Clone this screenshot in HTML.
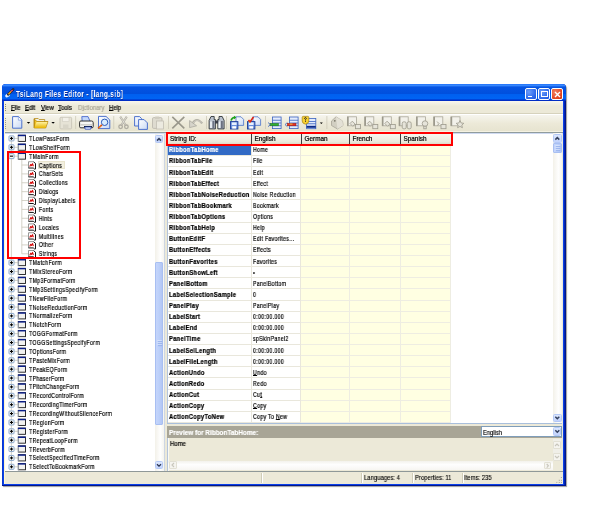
<!DOCTYPE html><html><head><meta charset="utf-8"><style>*{margin:0;padding:0;box-sizing:border-box}
html,body{width:600px;height:513px;background:#fff;overflow:hidden;font-family:"Liberation Sans",sans-serif;color:#000}
.a{position:absolute}
#win{left:2px;top:84px;width:564px;height:402px;background:#0a40e8;border-radius:4px 4px 0 0;box-shadow:inset -1.6px -1px 0 #00168e,inset 1px 0 0 #0838d0,1px 1px 1px rgba(40,40,40,.45)}
#title{left:2px;top:84px;width:564px;height:17px;border-radius:4px 4px 0 0;background:linear-gradient(#1a6af8 0px,#3d8eff 1.2px,#2a7af8 2px,#0654e2 3px,#0050de 9.5px,#0060f0 10.5px,#0064f4 15px,#0034cc 15.8px,#0028c0 17px)}
#ttext{left:16px;top:88.5px;color:#fff;font-weight:bold;font-size:9.2px;line-height:10px;white-space:nowrap;transform-origin:0 0;transform:scaleX(0.71);letter-spacing:0.45px;text-shadow:0.6px 0.6px 0 #0a2a9a}
.tbn{top:88px;width:12px;height:12px;border:1px solid #fff;border-radius:2px;background:radial-gradient(circle at 30% 30%,#6a9cfa,#2a66ea 70%,#1f55d8)}
#client{left:4px;top:101px;width:558.5px;height:383px;background:#ece9d8;box-shadow:inset 1px -1px 0 #fff6cc}
.menu{top:104.2px;font-size:6.4px;line-height:8px;white-space:nowrap;transform-origin:0 0;transform:scaleX(0.93);-webkit-text-stroke:0.2px currentColor}
#tree{left:5px;top:134px;width:150px;height:337px}
.tbg{left:5px;top:132.5px;width:150.5px;height:338.5px;background:#fff}
.ti{position:absolute;white-space:nowrap;font-size:6.6px;line-height:9px;height:9px;transform-origin:0 50%;transform:scaleX(0.795);letter-spacing:0.4px;-webkit-text-stroke:0.2px #000}
.sp{padding:0 1px;display:inline-block}
.vl{width:0;border-left:1px dotted #a0a0a0}
.hl{height:0;border-top:1px dotted #a0a0a0}
.pb{width:5.5px;height:5.5px;border:0.8px solid #7b9ebd;background:linear-gradient(135deg,#fff,#dcd9c8);border-radius:1px}
.pb i{position:absolute;background:#222}
.pb i.h{left:0.8px;top:1.65px;width:2.4px;height:0.7px}
.pb i.v{left:1.65px;top:0.8px;width:0.7px;height:2.4px}
.fi{width:9px;height:7.5px;background:linear-gradient(#e8e8e8,#c8c8c8);border:1px solid #505050;border-top:1.6px solid #0a246a;border-left:0.8px solid #8090b0}
.li{width:7px;height:7px}
.rb{border:2px solid #f00}
#grid{left:167px;top:132px;width:386px;height:291px;background:#fff;overflow:hidden;box-shadow:inset 1px 0 0 #b4c4dc}
.c0,.c1,.c2{height:11.125px;border-bottom:1px solid #e9e7dc}
.c0{left:1px;width:84px;border-right:1px solid #e9e7dc;background:#fff}
.c0 span{position:absolute;left:0.7px;top:1.6px;font-weight:bold;font-size:6.8px;line-height:8px;white-space:nowrap;transform-origin:0 0;transform:scaleX(0.85);letter-spacing:0.35px;-webkit-text-stroke:0.24px currentColor}
.c0.sel{background:#316ac5;color:#fff}
.c1{left:85px;width:49px;border-right:1px solid #e9e7dc;background:#fff}
.c1 span{position:absolute;left:0.9px;top:1.6px;font-size:6.6px;line-height:8px;white-space:nowrap;transform-origin:0 0;transform:scaleX(0.8);letter-spacing:0.35px;-webkit-text-stroke:0.2px #000}
.c2{left:134px;width:150px;border-bottom-color:#eeede2;background:#ffffe2;background-image:linear-gradient(90deg,transparent 48px,#eeede2 48px,#eeede2 49px,transparent 49px,transparent 99px,#eeede2 99px,#eeede2 100px,transparent 100px,transparent 149px,#eeede2 149px)}
.sb{background:linear-gradient(90deg,#f3f1e9,#fefefe 60%,#f5f4ee)}
.sbtn{background:linear-gradient(#dce7fd,#c2d3fc);border:0.8px solid #b4c8f6;border-radius:1.5px}
.hdr{background:linear-gradient(#f7f6ef,#ebeadb 70%,#d8d5c0);}
.hc{position:absolute;top:0;height:10px;border-left:1px solid #3c3c3c;font-size:6.4px;line-height:10px;white-space:nowrap;padding-left:2.5px;-webkit-text-stroke:0.2px #000}
.st{font-size:6.9px;line-height:8px;white-space:nowrap;-webkit-text-stroke:0.12px #000}
.ti,.c0 span,.c1 span,.hc,.menu,.st,#ttext{will-change:transform}
u{text-decoration-thickness:0.5px;text-underline-offset:0.3px}
</style></head><body>
<div class="a" id="win"></div>
<div class="a" id="title"></div>
<svg class="a" style="left:3px;top:85px" width="16" height="16" viewBox="3 85 16 16"><ellipse cx="7.6" cy="95.4" rx="2.6" ry="1.7" fill="#eaf4ff" transform="rotate(-30 7.6 95.4)"/><ellipse cx="8.6" cy="95.6" rx="1.4" ry="0.9" fill="#9cd0ff"/><path d="M13.2 89.4L8.2 94.4" stroke="#1a1a2a" stroke-width="2.4" stroke-linecap="round"/><path d="M12.6 90L11 91.6" stroke="#e05070" stroke-width="1.4"/><path d="M11 91.6L8.4 94.2" stroke="#f0a818" stroke-width="1.4"/><circle cx="13.2" cy="89.3" r="0.8" fill="#503828"/></svg>
<div class="a" id="ttext">TsiLang Files Editor - [lang.sib]</div>
<div class="a tbn" style="left:525px"><div class="a" style="left:1.6px;top:6.8px;width:4.6px;height:1.6px;background:#fff"></div></div>
<div class="a tbn" style="left:538px"><div class="a" style="left:2px;top:2px;width:6.5px;height:6px;border:1px solid #fff;border-top-width:1.8px"></div></div>
<div class="a tbn" style="left:551px;background:radial-gradient(circle at 30% 30%,#f08060,#e0441e 70%,#c83a18)"><svg class="a" style="left:1.5px;top:1.5px" width="7" height="7" viewBox="0 0 7 7"><path d="M1 1L6 6M6 1L1 6" stroke="#fff" stroke-width="1.4"/></svg></div>
<div class="a" id="client"></div>
<div class="a" style="left:5px;top:101px;width:557.5px;height:12.5px;background:linear-gradient(#f8f6ee,#ece9d8 40%)"></div>
<div class="a" style="left:5px;top:113px;width:557.5px;height:1px;background:#d6d2bd"></div>
<div class="a" style="left:5px;top:114px;width:557.5px;height:1px;background:#fff"></div>
<svg class="a" style="left:5px;top:103px" width="2" height="9"><g fill="#8a8778"><rect x="0" y="1" width="1" height="1"/><rect x="0" y="3" width="1" height="1"/><rect x="0" y="5" width="1" height="1"/><rect x="0" y="7" width="1" height="1"/></g></svg>
<div class="a menu" style="left:11px"><u>F</u>ile</div>
<div class="a menu" style="left:25px"><u>E</u>dit</div>
<div class="a menu" style="left:41px"><u>V</u>iew</div>
<div class="a menu" style="left:58px"><u>T</u>ools</div>
<div class="a menu" style="left:78px;color:#aca899">D<u>i</u>ctionary</div>
<div class="a menu" style="left:109px"><u>H</u>elp</div>
<div class="a" style="left:5px;top:115px;width:557.5px;height:17px;background:linear-gradient(#f6f5ee,#ece9d8 50%,#e6e3cf)"></div>
<div class="a" style="left:5px;top:131px;width:557.5px;height:1px;background:#f5f2e2"></div>


<svg class="a" style="left:0;top:113px" width="600" height="20" viewBox="0 113 600 20">
<defs>
 <linearGradient id="gdoc" x1="0" y1="0" x2="1" y2="1"><stop offset="0" stop-color="#ffffff"/><stop offset="1" stop-color="#c9d9f5"/></linearGradient>
 <linearGradient id="gfold" x1="0" y1="0" x2="0" y2="1"><stop offset="0" stop-color="#fff2a0"/><stop offset="1" stop-color="#e8b400"/></linearGradient>
</defs>
<!-- grip -->
<g fill="#9a978a"><rect x="5" y="118" width="1" height="1"/><rect x="5" y="120" width="1" height="1"/><rect x="5" y="122" width="1" height="1"/><rect x="5" y="124" width="1" height="1"/><rect x="5" y="126" width="1" height="1"/><rect x="5" y="128" width="1" height="1"/></g>
<!-- new -->
<path d="M12.6 116.6h6l3.2 3.4v8.2h-9.2z" fill="url(#gdoc)" stroke="#3c64c8" stroke-width="0.9"/>
<path d="M18.4 116.8v3.4h3.3" fill="#fff" stroke="#6a8ad8" stroke-width="0.6"/>
<path d="M26.8 122h3.4l-1.7 1.8z" fill="#000"/>
<!-- open -->
<path d="M34.2 119v9h11.5l2.3-6.5h-11z" fill="#f0c020" stroke="#b08000" stroke-width="0.7"/>
<path d="M34.2 128v-9.5h4l1 1h5.5v2" fill="none" stroke="#b08000" stroke-width="0.7"/>
<path d="M36.5 122h11l-2.2 6h-11z" fill="url(#gfold)"/>
<path d="M51.4 122h3.4l-1.7 1.8z" fill="#000"/>
<!-- save disabled -->
<rect x="60" y="117.3" width="11.6" height="11.6" rx="1" fill="#e6e3d6" stroke="#c8c5b8" stroke-width="0.9"/>
<rect x="62.5" y="117.6" width="6.5" height="4" fill="#f2f0e8" stroke="#cfccc0" stroke-width="0.6"/>
<rect x="63" y="124.5" width="5.5" height="4" fill="#d8d5c8"/>
<!-- sep -->
<rect x="75.3" y="116" width="0.8" height="13" fill="#cdcab8"/>
<!-- print -->
<path d="M81.8 116.6h6.2l2.2 5h-8z" fill="#c4d8fc" stroke="#3a5ac8" stroke-width="0.8"/>
<path d="M79.6 122.2q0-1.2 1.2-1.2h10.8q1.6 0 1.6 1.6v4q0 1.2-1.2 1.2h-11.2q-1.2 0-1.2-1.2z" fill="#f6f6f4" stroke="#1e1e1e" stroke-width="0.9"/>
<rect x="80.5" y="124.2" width="12" height="1.3" fill="#c8c8c4"/>
<rect x="84" y="126" width="8" height="1.4" fill="#0e1830"/>
<path d="M84.8 127h6.4l-0.6 2.2h-5.4z" fill="#e8f0ff" stroke="#2444b8" stroke-width="0.8"/>
<!-- preview -->
<path d="M98.5 116.4h7.5l3.8 3.6v8.6h-11.3z" fill="url(#gdoc)" stroke="#3c64c8" stroke-width="0.9"/>
<circle cx="104.6" cy="122.3" r="3.2" fill="#d8ecff" stroke="#2a5ab8" stroke-width="1"/>
<path d="M101.9 124.8l-3.8 3.6" stroke="#e05010" stroke-width="1.6"/>
<path d="M100.5 126.3l-1.2 1.1" stroke="#f8c020" stroke-width="1"/>
<rect x="113.4" y="116" width="0.8" height="13" fill="#cdcab8"/>
<!-- cut disabled -->
<path d="M120.2 116.6l5.6 8.6M126.8 116.6l-5.6 8.6" stroke="#b0ada2" stroke-width="2"/><path d="M120.2 116.6l5.6 8.6M126.8 116.6l-5.6 8.6" stroke="#ecebe4" stroke-width="0.7"/>
<circle cx="120.6" cy="126.8" r="1.8" fill="none" stroke="#b0ada2" stroke-width="1.3"/>
<circle cx="126.4" cy="126.8" r="1.8" fill="none" stroke="#b0ada2" stroke-width="1.3"/>
<!-- copy -->
<path d="M134.6 116.6h5l2 2v7.4h-7z" fill="url(#gdoc)" stroke="#3c64c8" stroke-width="0.9"/>
<path d="M138.6 119.6h5.5l3.3 3.3v6.5h-8.8z" fill="url(#gdoc)" stroke="#3c64c8" stroke-width="0.9"/>
<!-- paste disabled -->
<rect x="152.5" y="117.6" width="9.5" height="10.8" rx="1.2" fill="#dedbd0" stroke="#bdbab0" stroke-width="0.9"/>
<rect x="155" y="116.5" width="4.5" height="2.5" rx="0.6" fill="#cfccc0"/>
<rect x="156.5" y="121" width="7" height="8" fill="#eceae0" stroke="#c2bfb3" stroke-width="0.8"/>
<rect x="168" y="116" width="0.8" height="13" fill="#cdcab8"/>
<!-- delete -->
<path d="M172.3 116.8l12 11.6M184.3 116.8l-12 11.6" stroke="#9a988c" stroke-width="1.6"/>
<!-- undo disabled -->
<path d="M192.5 123.6Q196.5 116.5 202.2 123.4" stroke="#b2b0a6" stroke-width="2.2" fill="none"/>
<path d="M192.8 123.2Q196.5 118 201.5 122.6" stroke="#d8d6cc" stroke-width="0.7" fill="none"/>
<path d="M189.6 120.6V127.6l7-1.8z" fill="#d6d4ca" stroke="#aaa89e" stroke-width="0.8"/>
<rect x="206" y="116" width="0.8" height="13" fill="#cdcab8"/>
<!-- binoculars -->
<path d="M211 116.5h3.2v3h1.2v9.4h-6.3v-8.4z" fill="#b8c0cc" stroke="#202428" stroke-width="0.8"/>
<path d="M222.2 116.5h-3.2v3h-1.2v9.4h6.3v-8.4z" fill="#b8c0cc" stroke="#202428" stroke-width="0.8"/>
<rect x="215" y="120.5" width="3.2" height="3" fill="#3a3e48"/>
<rect x="210.2" y="121.5" width="1.6" height="6.5" fill="#f0f4f8"/>
<rect x="218.6" y="121.5" width="1.6" height="6.5" fill="#f0f4f8"/>
<rect x="212.5" y="121" width="1.8" height="7.5" fill="#6a7080"/>
<rect x="221" y="121" width="1.8" height="7.5" fill="#6a7080"/>
<rect x="226" y="116" width="0.8" height="13" fill="#cdcab8"/>
<!-- icon A -->
<path d="M236 116.8h5l2.6 2.6v6h-7.6z" fill="url(#gdoc)" stroke="#4a72c8" stroke-width="0.8"/>
<rect x="230.5" y="121.6" width="7.4" height="7.4" fill="#6a90dc" stroke="#1a3a9a" stroke-width="0.9"/>
<rect x="231.8" y="122.4" width="4.8" height="2.6" fill="#e8f0ff"/>
<rect x="232.2" y="126.2" width="4" height="2.4" fill="#fff"/>
<path d="M231 120.5q0.8-3 4.5-3.2" stroke="#18a018" stroke-width="1.5" fill="none"/>
<path d="M234 115.8l2.2 1.6-2.2 1.8z" fill="#18a018"/>
<!-- icon B -->
<path d="M253 116.8h5l2.6 2.6v6h-7.6z" fill="url(#gdoc)" stroke="#4a72c8" stroke-width="0.8"/>
<rect x="247.5" y="121.6" width="7.4" height="7.4" fill="#6a90dc" stroke="#1a3a9a" stroke-width="0.9"/>
<rect x="248.8" y="122.4" width="4.8" height="2.6" fill="#e8f0ff"/>
<rect x="249.2" y="126.2" width="4" height="2.4" fill="#fff"/>
<path d="M248.5 120l1.5 2 3.5-5" stroke="#e02010" stroke-width="1.5" fill="none"/>
<path d="M249 121.5l1 1.2" stroke="#f8d020" stroke-width="1"/>
<rect x="265" y="116" width="0.8" height="13" fill="#cdcab8"/>
<!-- icon C list green -->
<g stroke="#3a62c0" stroke-width="0.8" fill="#e4ecfc"><rect x="272.5" y="117" width="8.6" height="11.6"/></g>
<g fill="#3a62c0"><rect x="272.5" y="119.8" width="8.6" height="0.8"/><rect x="272.5" y="122.6" width="8.6" height="0.8"/><rect x="272.5" y="125.4" width="8.6" height="0.8"/></g>
<rect x="270" y="123.4" width="8.5" height="2.4" fill="#30b030" stroke="#186818" stroke-width="0.5"/>
<path d="M268 122.5l2.4 2.1-2.4 2.1" stroke="#3a62c0" stroke-width="0.8" fill="none"/>
<!-- icon D list red -->
<g stroke="#3a62c0" stroke-width="0.8" fill="#e4ecfc"><rect x="289.5" y="117" width="8.6" height="11.6"/></g>
<g fill="#3a62c0"><rect x="289.5" y="119.8" width="8.6" height="0.8"/><rect x="289.5" y="122.6" width="8.6" height="0.8"/><rect x="289.5" y="125.4" width="8.6" height="0.8"/></g>
<rect x="287.5" y="123.4" width="8.5" height="2.4" fill="#e83020" stroke="#901010" stroke-width="0.5"/>
<rect x="289.5" y="123.6" width="3" height="1" fill="#f8c040"/>
<path d="M287.4 122.5l-2.4 2.1 2.4 2.1" stroke="#3a62c0" stroke-width="0.8" fill="none"/>
<!-- icon E -->
<g stroke="#3a62c0" stroke-width="0.8" fill="#e4ecfc"><rect x="306.6" y="118.5" width="9.2" height="10.2"/></g>
<g fill="#3a62c0"><rect x="306.6" y="121" width="9.2" height="0.8"/><rect x="306.6" y="123.4" width="9.2" height="0.8"/></g>
<rect x="306.6" y="125.8" width="9.2" height="2" fill="#0a2a8a"/>
<path d="M302.2 117.4q0-1 1-1h4.6q1 0 1 1v3.6q0 2.6-3.3 3.2q-3.3-0.6-3.3-3.2z" fill="#f8d030" stroke="#a88210" stroke-width="0.7"/>
<path d="M304.3 118.8q0.4-1.4 1.6-1.1q1.3 0.5-0.4 1.9v0.9M305.5 121.2v0.8" stroke="#202020" stroke-width="0.9" fill="none"/>
<path d="M319.8 122.4h3l-1.5 1.6z" fill="#000"/>
<rect x="326.5" y="116" width="0.8" height="13" fill="#cdcab8"/>
<!-- disabled icons -->
<path d="M331.5 121l4.5-4.2 6.5 4.2 0.5 4.5-5.5 3.5-6-3.5z" fill="#d2cfc2" stroke="#a8a598" stroke-width="0.8"/>
<path d="M336 116.8l6.5 4.2 0.5 4.5-5.5 3.5z" fill="#e4e1d6"/>
<circle cx="334.8" cy="120.8" r="0.9" fill="#7a776a"/>
<rect x="347.5" y="116.8" width="9" height="9" fill="#f2f1ea" stroke="#aaa79a" stroke-width="0.8"/>
<rect x="347.1" y="116.8" width="1.6" height="9" fill="#9c998c"/>
<rect x="364.8" y="116.8" width="9" height="9" fill="#f2f1ea" stroke="#aaa79a" stroke-width="0.8"/>
<rect x="364.40000000000003" y="116.8" width="1.6" height="9" fill="#9c998c"/>
<rect x="382.3" y="116.8" width="9" height="9" fill="#f2f1ea" stroke="#aaa79a" stroke-width="0.8"/>
<rect x="381.90000000000003" y="116.8" width="1.6" height="9" fill="#9c998c"/>
<rect x="399.2" y="116.8" width="9" height="9" fill="#f2f1ea" stroke="#aaa79a" stroke-width="0.8"/>
<rect x="398.8" y="116.8" width="1.6" height="9" fill="#9c998c"/>
<rect x="416.5" y="116.8" width="9" height="9" fill="#f2f1ea" stroke="#aaa79a" stroke-width="0.8"/>
<rect x="416.1" y="116.8" width="1.6" height="9" fill="#9c998c"/>
<rect x="433.8" y="116.8" width="9" height="9" fill="#f2f1ea" stroke="#aaa79a" stroke-width="0.8"/>
<rect x="433.40000000000003" y="116.8" width="1.6" height="9" fill="#9c998c"/>
<rect x="451" y="116.8" width="9" height="9" fill="#f2f1ea" stroke="#aaa79a" stroke-width="0.8"/>
<rect x="450.6" y="116.8" width="1.6" height="9" fill="#9c998c"/>
<g fill="#e6e4da" stroke="#9c998c" stroke-width="0.8">
<path d="M350 123.5l2.3-2.3 2.8 2.8-2.3 2.3z"/><rect x="355.5" y="124.5" width="5" height="4.2"/>
<path d="M367.3 123.5l2.3-2.3 2.8 2.8-2.3 2.3z"/><rect x="372.8" y="124.5" width="5" height="4.2"/>
<path d="M384.8 123.5l2.3-2.3 2.8 2.8-2.3 2.3z"/><rect x="390.3" y="124.5" width="5" height="4.2"/>
<rect x="402.2" y="121.8" width="4" height="7" rx="1.6"/><rect x="407.2" y="121.8" width="4" height="7" rx="1.6"/>
<circle cx="425" cy="123.6" r="2.8"/><rect x="423.8" y="126.2" width="2.4" height="2.6"/>
<path d="M437 121.5l2.2 2.2-2.2 2.2"/><rect x="441" y="124.5" width="5" height="4.2"/>
<path d="M460 120.5l1.2 2.5 2.6 0.3-2 1.8 0.6 2.6-2.4-1.3-2.4 1.3 0.6-2.6-2-1.8 2.6-0.3z"/>
</g>
</svg>

<div class="a tbg"></div>
<div class="ti" style="left:28.7px;top:133.90px">TLowPassForm</div>
<div class="ti" style="left:28.7px;top:142.78px">TLowShelfForm</div>
<div class="ti" style="left:28.7px;top:151.65px">TMainForm</div>
<div class="a" style="left:38px;top:160.53px;width:27px;height:8.8px;background:#f2efe0;border:0.6px solid #e8e3cc"></div>
<div class="ti" style="left:38.2px;top:160.53px"><span class="sp">Captions</span></div>
<div class="ti" style="left:38.2px;top:169.40px"><span class="sp">CharSets</span></div>
<div class="ti" style="left:38.2px;top:178.28px"><span class="sp">Collections</span></div>
<div class="ti" style="left:38.2px;top:187.16px"><span class="sp">Dialogs</span></div>
<div class="ti" style="left:38.2px;top:196.03px"><span class="sp">DisplayLabels</span></div>
<div class="ti" style="left:38.2px;top:204.91px"><span class="sp">Fonts</span></div>
<div class="ti" style="left:38.2px;top:213.78px"><span class="sp">Hints</span></div>
<div class="ti" style="left:38.2px;top:222.66px"><span class="sp">Locales</span></div>
<div class="ti" style="left:38.2px;top:231.54px"><span class="sp">Multilines</span></div>
<div class="ti" style="left:38.2px;top:240.41px"><span class="sp">Other</span></div>
<div class="ti" style="left:38.2px;top:249.29px"><span class="sp">Strings</span></div>
<div class="ti" style="left:28.7px;top:258.16px">TMatchForm</div>
<div class="ti" style="left:28.7px;top:267.04px">TMixStereoForm</div>
<div class="ti" style="left:28.7px;top:275.92px">TMp3FormatForm</div>
<div class="ti" style="left:28.7px;top:284.79px">TMp3SettingsSpecifyForm</div>
<div class="ti" style="left:28.7px;top:293.67px">TNewFileForm</div>
<div class="ti" style="left:28.7px;top:302.54px">TNoiseReductionForm</div>
<div class="ti" style="left:28.7px;top:311.42px">TNormalizeForm</div>
<div class="ti" style="left:28.7px;top:320.30px">TNotchForm</div>
<div class="ti" style="left:28.7px;top:329.17px">TOGGFormatForm</div>
<div class="ti" style="left:28.7px;top:338.05px">TOGGSettingsSpecifyForm</div>
<div class="ti" style="left:28.7px;top:346.92px">TOptionsForm</div>
<div class="ti" style="left:28.7px;top:355.80px">TPasteMixForm</div>
<div class="ti" style="left:28.7px;top:364.68px">TPeakEQForm</div>
<div class="ti" style="left:28.7px;top:373.55px">TPhaserForm</div>
<div class="ti" style="left:28.7px;top:382.43px">TPitchChangeForm</div>
<div class="ti" style="left:28.7px;top:391.30px">TRecordControlForm</div>
<div class="ti" style="left:28.7px;top:400.18px">TRecordingTimerForm</div>
<div class="ti" style="left:28.7px;top:409.06px">TRecordingWithoutSilenceForm</div>
<div class="ti" style="left:28.7px;top:417.93px">TRegionForm</div>
<div class="ti" style="left:28.7px;top:426.81px">TRegisterForm</div>
<div class="ti" style="left:28.7px;top:435.68px">TRepeatLoopForm</div>
<div class="ti" style="left:28.7px;top:444.56px">TReverbForm</div>
<div class="ti" style="left:28.7px;top:453.44px">TSelectSpecifiedTimeForm</div>
<div class="ti" style="left:28.7px;top:462.31px">TSelectToBookmarkForm</div>
<svg class="a" style="left:0;top:0" width="600" height="513"><line x1="11.4" y1="138.40" x2="11.4" y2="466.81" stroke="#c9c7ba" stroke-width="0.8"/><line x1="21.8" y1="159.65" x2="21.8" y2="253.79" stroke="#c9c7ba" stroke-width="0.8"/><line x1="14" y1="138.40" x2="17.8" y2="138.40" stroke="#c9c7ba" stroke-width="0.8"/><rect x="9" y="135.90" width="5" height="5" fill="#fafaf6" stroke="#7d9dc4" stroke-width="0.9" rx="0.6"/><path d="M10 138.40h3" stroke="#000" stroke-width="1.1"/><path d="M11.5 136.90v3" stroke="#000" stroke-width="1.1"/><rect x="18.3" y="135.20" width="7.2" height="6.2" fill="#f2f2f0" stroke="#1a1a1a" stroke-width="0.9"/><rect x="17.9" y="134.80" width="7.8" height="1.4" fill="#0a1e8c"/><path d="M18.3 136.20v5.4" stroke="#b8c0d0" stroke-width="0.8"/><line x1="14" y1="147.28" x2="17.8" y2="147.28" stroke="#c9c7ba" stroke-width="0.8"/><rect x="9" y="144.78" width="5" height="5" fill="#fafaf6" stroke="#7d9dc4" stroke-width="0.9" rx="0.6"/><path d="M10 147.28h3" stroke="#000" stroke-width="1.1"/><path d="M11.5 145.78v3" stroke="#000" stroke-width="1.1"/><rect x="18.3" y="144.08" width="7.2" height="6.2" fill="#f2f2f0" stroke="#1a1a1a" stroke-width="0.9"/><rect x="17.9" y="143.68" width="7.8" height="1.4" fill="#0a1e8c"/><path d="M18.3 145.08v5.4" stroke="#b8c0d0" stroke-width="0.8"/><line x1="14" y1="156.15" x2="17.8" y2="156.15" stroke="#c9c7ba" stroke-width="0.8"/><rect x="9" y="153.65" width="5" height="5" fill="#fafaf6" stroke="#7d9dc4" stroke-width="0.9" rx="0.6"/><path d="M10 156.15h3" stroke="#000" stroke-width="1.1"/><rect x="18.3" y="152.95" width="7.2" height="6.2" fill="#f2f2f0" stroke="#1a1a1a" stroke-width="0.9"/><rect x="17.9" y="152.55" width="7.8" height="1.4" fill="#0a1e8c"/><path d="M18.3 153.95v5.4" stroke="#b8c0d0" stroke-width="0.8"/><line x1="21.8" y1="165.03" x2="28" y2="165.03" stroke="#c9c7ba" stroke-width="0.8"/><g transform="translate(28 161.23)"><path d="M0.5 7V0.5h5.2l2 1.6V7.2z" fill="#fff"/><path d="M0.5 7V0.5h5" stroke="#8a8a8a" stroke-width="0.9" fill="none"/><path d="M5.5 0.6l2 1.6v5.6h-1.2M0.5 6.8h4.8l1 0.9" stroke="#111" stroke-width="1" fill="none"/><path d="M1.7 5.4l1-2.2 0.8 1.2 1-2 0.9 2.6" stroke="#d41010" stroke-width="1.1" fill="none" stroke-linejoin="round"/></g><line x1="21.8" y1="173.90" x2="28" y2="173.90" stroke="#c9c7ba" stroke-width="0.8"/><g transform="translate(28 170.10)"><path d="M0.5 7V0.5h5.2l2 1.6V7.2z" fill="#fff"/><path d="M0.5 7V0.5h5" stroke="#8a8a8a" stroke-width="0.9" fill="none"/><path d="M5.5 0.6l2 1.6v5.6h-1.2M0.5 6.8h4.8l1 0.9" stroke="#111" stroke-width="1" fill="none"/><path d="M1.7 5.4l1-2.2 0.8 1.2 1-2 0.9 2.6" stroke="#d41010" stroke-width="1.1" fill="none" stroke-linejoin="round"/></g><line x1="21.8" y1="182.78" x2="28" y2="182.78" stroke="#c9c7ba" stroke-width="0.8"/><g transform="translate(28 178.98)"><path d="M0.5 7V0.5h5.2l2 1.6V7.2z" fill="#fff"/><path d="M0.5 7V0.5h5" stroke="#8a8a8a" stroke-width="0.9" fill="none"/><path d="M5.5 0.6l2 1.6v5.6h-1.2M0.5 6.8h4.8l1 0.9" stroke="#111" stroke-width="1" fill="none"/><path d="M1.7 5.4l1-2.2 0.8 1.2 1-2 0.9 2.6" stroke="#d41010" stroke-width="1.1" fill="none" stroke-linejoin="round"/></g><line x1="21.8" y1="191.66" x2="28" y2="191.66" stroke="#c9c7ba" stroke-width="0.8"/><g transform="translate(28 187.86)"><path d="M0.5 7V0.5h5.2l2 1.6V7.2z" fill="#fff"/><path d="M0.5 7V0.5h5" stroke="#8a8a8a" stroke-width="0.9" fill="none"/><path d="M5.5 0.6l2 1.6v5.6h-1.2M0.5 6.8h4.8l1 0.9" stroke="#111" stroke-width="1" fill="none"/><path d="M1.7 5.4l1-2.2 0.8 1.2 1-2 0.9 2.6" stroke="#d41010" stroke-width="1.1" fill="none" stroke-linejoin="round"/></g><line x1="21.8" y1="200.53" x2="28" y2="200.53" stroke="#c9c7ba" stroke-width="0.8"/><g transform="translate(28 196.73)"><path d="M0.5 7V0.5h5.2l2 1.6V7.2z" fill="#fff"/><path d="M0.5 7V0.5h5" stroke="#8a8a8a" stroke-width="0.9" fill="none"/><path d="M5.5 0.6l2 1.6v5.6h-1.2M0.5 6.8h4.8l1 0.9" stroke="#111" stroke-width="1" fill="none"/><path d="M1.7 5.4l1-2.2 0.8 1.2 1-2 0.9 2.6" stroke="#d41010" stroke-width="1.1" fill="none" stroke-linejoin="round"/></g><line x1="21.8" y1="209.41" x2="28" y2="209.41" stroke="#c9c7ba" stroke-width="0.8"/><g transform="translate(28 205.61)"><path d="M0.5 7V0.5h5.2l2 1.6V7.2z" fill="#fff"/><path d="M0.5 7V0.5h5" stroke="#8a8a8a" stroke-width="0.9" fill="none"/><path d="M5.5 0.6l2 1.6v5.6h-1.2M0.5 6.8h4.8l1 0.9" stroke="#111" stroke-width="1" fill="none"/><path d="M1.7 5.4l1-2.2 0.8 1.2 1-2 0.9 2.6" stroke="#d41010" stroke-width="1.1" fill="none" stroke-linejoin="round"/></g><line x1="21.8" y1="218.28" x2="28" y2="218.28" stroke="#c9c7ba" stroke-width="0.8"/><g transform="translate(28 214.48)"><path d="M0.5 7V0.5h5.2l2 1.6V7.2z" fill="#fff"/><path d="M0.5 7V0.5h5" stroke="#8a8a8a" stroke-width="0.9" fill="none"/><path d="M5.5 0.6l2 1.6v5.6h-1.2M0.5 6.8h4.8l1 0.9" stroke="#111" stroke-width="1" fill="none"/><path d="M1.7 5.4l1-2.2 0.8 1.2 1-2 0.9 2.6" stroke="#d41010" stroke-width="1.1" fill="none" stroke-linejoin="round"/></g><line x1="21.8" y1="227.16" x2="28" y2="227.16" stroke="#c9c7ba" stroke-width="0.8"/><g transform="translate(28 223.36)"><path d="M0.5 7V0.5h5.2l2 1.6V7.2z" fill="#fff"/><path d="M0.5 7V0.5h5" stroke="#8a8a8a" stroke-width="0.9" fill="none"/><path d="M5.5 0.6l2 1.6v5.6h-1.2M0.5 6.8h4.8l1 0.9" stroke="#111" stroke-width="1" fill="none"/><path d="M1.7 5.4l1-2.2 0.8 1.2 1-2 0.9 2.6" stroke="#d41010" stroke-width="1.1" fill="none" stroke-linejoin="round"/></g><line x1="21.8" y1="236.04" x2="28" y2="236.04" stroke="#c9c7ba" stroke-width="0.8"/><g transform="translate(28 232.24)"><path d="M0.5 7V0.5h5.2l2 1.6V7.2z" fill="#fff"/><path d="M0.5 7V0.5h5" stroke="#8a8a8a" stroke-width="0.9" fill="none"/><path d="M5.5 0.6l2 1.6v5.6h-1.2M0.5 6.8h4.8l1 0.9" stroke="#111" stroke-width="1" fill="none"/><path d="M1.7 5.4l1-2.2 0.8 1.2 1-2 0.9 2.6" stroke="#d41010" stroke-width="1.1" fill="none" stroke-linejoin="round"/></g><line x1="21.8" y1="244.91" x2="28" y2="244.91" stroke="#c9c7ba" stroke-width="0.8"/><g transform="translate(28 241.11)"><path d="M0.5 7V0.5h5.2l2 1.6V7.2z" fill="#fff"/><path d="M0.5 7V0.5h5" stroke="#8a8a8a" stroke-width="0.9" fill="none"/><path d="M5.5 0.6l2 1.6v5.6h-1.2M0.5 6.8h4.8l1 0.9" stroke="#111" stroke-width="1" fill="none"/><path d="M1.7 5.4l1-2.2 0.8 1.2 1-2 0.9 2.6" stroke="#d41010" stroke-width="1.1" fill="none" stroke-linejoin="round"/></g><line x1="21.8" y1="253.79" x2="28" y2="253.79" stroke="#c9c7ba" stroke-width="0.8"/><g transform="translate(28 249.99)"><path d="M0.5 7V0.5h5.2l2 1.6V7.2z" fill="#fff"/><path d="M0.5 7V0.5h5" stroke="#8a8a8a" stroke-width="0.9" fill="none"/><path d="M5.5 0.6l2 1.6v5.6h-1.2M0.5 6.8h4.8l1 0.9" stroke="#111" stroke-width="1" fill="none"/><path d="M1.7 5.4l1-2.2 0.8 1.2 1-2 0.9 2.6" stroke="#d41010" stroke-width="1.1" fill="none" stroke-linejoin="round"/></g><line x1="14" y1="262.66" x2="17.8" y2="262.66" stroke="#c9c7ba" stroke-width="0.8"/><rect x="9" y="260.16" width="5" height="5" fill="#fafaf6" stroke="#7d9dc4" stroke-width="0.9" rx="0.6"/><path d="M10 262.66h3" stroke="#000" stroke-width="1.1"/><path d="M11.5 261.16v3" stroke="#000" stroke-width="1.1"/><rect x="18.3" y="259.46" width="7.2" height="6.2" fill="#f2f2f0" stroke="#1a1a1a" stroke-width="0.9"/><rect x="17.9" y="259.06" width="7.8" height="1.4" fill="#0a1e8c"/><path d="M18.3 260.46v5.4" stroke="#b8c0d0" stroke-width="0.8"/><line x1="14" y1="271.54" x2="17.8" y2="271.54" stroke="#c9c7ba" stroke-width="0.8"/><rect x="9" y="269.04" width="5" height="5" fill="#fafaf6" stroke="#7d9dc4" stroke-width="0.9" rx="0.6"/><path d="M10 271.54h3" stroke="#000" stroke-width="1.1"/><path d="M11.5 270.04v3" stroke="#000" stroke-width="1.1"/><rect x="18.3" y="268.34" width="7.2" height="6.2" fill="#f2f2f0" stroke="#1a1a1a" stroke-width="0.9"/><rect x="17.9" y="267.94" width="7.8" height="1.4" fill="#0a1e8c"/><path d="M18.3 269.34v5.4" stroke="#b8c0d0" stroke-width="0.8"/><line x1="14" y1="280.42" x2="17.8" y2="280.42" stroke="#c9c7ba" stroke-width="0.8"/><rect x="9" y="277.92" width="5" height="5" fill="#fafaf6" stroke="#7d9dc4" stroke-width="0.9" rx="0.6"/><path d="M10 280.42h3" stroke="#000" stroke-width="1.1"/><path d="M11.5 278.92v3" stroke="#000" stroke-width="1.1"/><rect x="18.3" y="277.22" width="7.2" height="6.2" fill="#f2f2f0" stroke="#1a1a1a" stroke-width="0.9"/><rect x="17.9" y="276.82" width="7.8" height="1.4" fill="#0a1e8c"/><path d="M18.3 278.22v5.4" stroke="#b8c0d0" stroke-width="0.8"/><line x1="14" y1="289.29" x2="17.8" y2="289.29" stroke="#c9c7ba" stroke-width="0.8"/><rect x="9" y="286.79" width="5" height="5" fill="#fafaf6" stroke="#7d9dc4" stroke-width="0.9" rx="0.6"/><path d="M10 289.29h3" stroke="#000" stroke-width="1.1"/><path d="M11.5 287.79v3" stroke="#000" stroke-width="1.1"/><rect x="18.3" y="286.09" width="7.2" height="6.2" fill="#f2f2f0" stroke="#1a1a1a" stroke-width="0.9"/><rect x="17.9" y="285.69" width="7.8" height="1.4" fill="#0a1e8c"/><path d="M18.3 287.09v5.4" stroke="#b8c0d0" stroke-width="0.8"/><line x1="14" y1="298.17" x2="17.8" y2="298.17" stroke="#c9c7ba" stroke-width="0.8"/><rect x="9" y="295.67" width="5" height="5" fill="#fafaf6" stroke="#7d9dc4" stroke-width="0.9" rx="0.6"/><path d="M10 298.17h3" stroke="#000" stroke-width="1.1"/><path d="M11.5 296.67v3" stroke="#000" stroke-width="1.1"/><rect x="18.3" y="294.97" width="7.2" height="6.2" fill="#f2f2f0" stroke="#1a1a1a" stroke-width="0.9"/><rect x="17.9" y="294.57" width="7.8" height="1.4" fill="#0a1e8c"/><path d="M18.3 295.97v5.4" stroke="#b8c0d0" stroke-width="0.8"/><line x1="14" y1="307.04" x2="17.8" y2="307.04" stroke="#c9c7ba" stroke-width="0.8"/><rect x="9" y="304.54" width="5" height="5" fill="#fafaf6" stroke="#7d9dc4" stroke-width="0.9" rx="0.6"/><path d="M10 307.04h3" stroke="#000" stroke-width="1.1"/><path d="M11.5 305.54v3" stroke="#000" stroke-width="1.1"/><rect x="18.3" y="303.84" width="7.2" height="6.2" fill="#f2f2f0" stroke="#1a1a1a" stroke-width="0.9"/><rect x="17.9" y="303.44" width="7.8" height="1.4" fill="#0a1e8c"/><path d="M18.3 304.84v5.4" stroke="#b8c0d0" stroke-width="0.8"/><line x1="14" y1="315.92" x2="17.8" y2="315.92" stroke="#c9c7ba" stroke-width="0.8"/><rect x="9" y="313.42" width="5" height="5" fill="#fafaf6" stroke="#7d9dc4" stroke-width="0.9" rx="0.6"/><path d="M10 315.92h3" stroke="#000" stroke-width="1.1"/><path d="M11.5 314.42v3" stroke="#000" stroke-width="1.1"/><rect x="18.3" y="312.72" width="7.2" height="6.2" fill="#f2f2f0" stroke="#1a1a1a" stroke-width="0.9"/><rect x="17.9" y="312.32" width="7.8" height="1.4" fill="#0a1e8c"/><path d="M18.3 313.72v5.4" stroke="#b8c0d0" stroke-width="0.8"/><line x1="14" y1="324.80" x2="17.8" y2="324.80" stroke="#c9c7ba" stroke-width="0.8"/><rect x="9" y="322.30" width="5" height="5" fill="#fafaf6" stroke="#7d9dc4" stroke-width="0.9" rx="0.6"/><path d="M10 324.80h3" stroke="#000" stroke-width="1.1"/><path d="M11.5 323.30v3" stroke="#000" stroke-width="1.1"/><rect x="18.3" y="321.60" width="7.2" height="6.2" fill="#f2f2f0" stroke="#1a1a1a" stroke-width="0.9"/><rect x="17.9" y="321.20" width="7.8" height="1.4" fill="#0a1e8c"/><path d="M18.3 322.60v5.4" stroke="#b8c0d0" stroke-width="0.8"/><line x1="14" y1="333.67" x2="17.8" y2="333.67" stroke="#c9c7ba" stroke-width="0.8"/><rect x="9" y="331.17" width="5" height="5" fill="#fafaf6" stroke="#7d9dc4" stroke-width="0.9" rx="0.6"/><path d="M10 333.67h3" stroke="#000" stroke-width="1.1"/><path d="M11.5 332.17v3" stroke="#000" stroke-width="1.1"/><rect x="18.3" y="330.47" width="7.2" height="6.2" fill="#f2f2f0" stroke="#1a1a1a" stroke-width="0.9"/><rect x="17.9" y="330.07" width="7.8" height="1.4" fill="#0a1e8c"/><path d="M18.3 331.47v5.4" stroke="#b8c0d0" stroke-width="0.8"/><line x1="14" y1="342.55" x2="17.8" y2="342.55" stroke="#c9c7ba" stroke-width="0.8"/><rect x="9" y="340.05" width="5" height="5" fill="#fafaf6" stroke="#7d9dc4" stroke-width="0.9" rx="0.6"/><path d="M10 342.55h3" stroke="#000" stroke-width="1.1"/><path d="M11.5 341.05v3" stroke="#000" stroke-width="1.1"/><rect x="18.3" y="339.35" width="7.2" height="6.2" fill="#f2f2f0" stroke="#1a1a1a" stroke-width="0.9"/><rect x="17.9" y="338.95" width="7.8" height="1.4" fill="#0a1e8c"/><path d="M18.3 340.35v5.4" stroke="#b8c0d0" stroke-width="0.8"/><line x1="14" y1="351.42" x2="17.8" y2="351.42" stroke="#c9c7ba" stroke-width="0.8"/><rect x="9" y="348.92" width="5" height="5" fill="#fafaf6" stroke="#7d9dc4" stroke-width="0.9" rx="0.6"/><path d="M10 351.42h3" stroke="#000" stroke-width="1.1"/><path d="M11.5 349.92v3" stroke="#000" stroke-width="1.1"/><rect x="18.3" y="348.22" width="7.2" height="6.2" fill="#f2f2f0" stroke="#1a1a1a" stroke-width="0.9"/><rect x="17.9" y="347.82" width="7.8" height="1.4" fill="#0a1e8c"/><path d="M18.3 349.22v5.4" stroke="#b8c0d0" stroke-width="0.8"/><line x1="14" y1="360.30" x2="17.8" y2="360.30" stroke="#c9c7ba" stroke-width="0.8"/><rect x="9" y="357.80" width="5" height="5" fill="#fafaf6" stroke="#7d9dc4" stroke-width="0.9" rx="0.6"/><path d="M10 360.30h3" stroke="#000" stroke-width="1.1"/><path d="M11.5 358.80v3" stroke="#000" stroke-width="1.1"/><rect x="18.3" y="357.10" width="7.2" height="6.2" fill="#f2f2f0" stroke="#1a1a1a" stroke-width="0.9"/><rect x="17.9" y="356.70" width="7.8" height="1.4" fill="#0a1e8c"/><path d="M18.3 358.10v5.4" stroke="#b8c0d0" stroke-width="0.8"/><line x1="14" y1="369.18" x2="17.8" y2="369.18" stroke="#c9c7ba" stroke-width="0.8"/><rect x="9" y="366.68" width="5" height="5" fill="#fafaf6" stroke="#7d9dc4" stroke-width="0.9" rx="0.6"/><path d="M10 369.18h3" stroke="#000" stroke-width="1.1"/><path d="M11.5 367.68v3" stroke="#000" stroke-width="1.1"/><rect x="18.3" y="365.98" width="7.2" height="6.2" fill="#f2f2f0" stroke="#1a1a1a" stroke-width="0.9"/><rect x="17.9" y="365.58" width="7.8" height="1.4" fill="#0a1e8c"/><path d="M18.3 366.98v5.4" stroke="#b8c0d0" stroke-width="0.8"/><line x1="14" y1="378.05" x2="17.8" y2="378.05" stroke="#c9c7ba" stroke-width="0.8"/><rect x="9" y="375.55" width="5" height="5" fill="#fafaf6" stroke="#7d9dc4" stroke-width="0.9" rx="0.6"/><path d="M10 378.05h3" stroke="#000" stroke-width="1.1"/><path d="M11.5 376.55v3" stroke="#000" stroke-width="1.1"/><rect x="18.3" y="374.85" width="7.2" height="6.2" fill="#f2f2f0" stroke="#1a1a1a" stroke-width="0.9"/><rect x="17.9" y="374.45" width="7.8" height="1.4" fill="#0a1e8c"/><path d="M18.3 375.85v5.4" stroke="#b8c0d0" stroke-width="0.8"/><line x1="14" y1="386.93" x2="17.8" y2="386.93" stroke="#c9c7ba" stroke-width="0.8"/><rect x="9" y="384.43" width="5" height="5" fill="#fafaf6" stroke="#7d9dc4" stroke-width="0.9" rx="0.6"/><path d="M10 386.93h3" stroke="#000" stroke-width="1.1"/><path d="M11.5 385.43v3" stroke="#000" stroke-width="1.1"/><rect x="18.3" y="383.73" width="7.2" height="6.2" fill="#f2f2f0" stroke="#1a1a1a" stroke-width="0.9"/><rect x="17.9" y="383.33" width="7.8" height="1.4" fill="#0a1e8c"/><path d="M18.3 384.73v5.4" stroke="#b8c0d0" stroke-width="0.8"/><line x1="14" y1="395.80" x2="17.8" y2="395.80" stroke="#c9c7ba" stroke-width="0.8"/><rect x="9" y="393.30" width="5" height="5" fill="#fafaf6" stroke="#7d9dc4" stroke-width="0.9" rx="0.6"/><path d="M10 395.80h3" stroke="#000" stroke-width="1.1"/><path d="M11.5 394.30v3" stroke="#000" stroke-width="1.1"/><rect x="18.3" y="392.60" width="7.2" height="6.2" fill="#f2f2f0" stroke="#1a1a1a" stroke-width="0.9"/><rect x="17.9" y="392.20" width="7.8" height="1.4" fill="#0a1e8c"/><path d="M18.3 393.60v5.4" stroke="#b8c0d0" stroke-width="0.8"/><line x1="14" y1="404.68" x2="17.8" y2="404.68" stroke="#c9c7ba" stroke-width="0.8"/><rect x="9" y="402.18" width="5" height="5" fill="#fafaf6" stroke="#7d9dc4" stroke-width="0.9" rx="0.6"/><path d="M10 404.68h3" stroke="#000" stroke-width="1.1"/><path d="M11.5 403.18v3" stroke="#000" stroke-width="1.1"/><rect x="18.3" y="401.48" width="7.2" height="6.2" fill="#f2f2f0" stroke="#1a1a1a" stroke-width="0.9"/><rect x="17.9" y="401.08" width="7.8" height="1.4" fill="#0a1e8c"/><path d="M18.3 402.48v5.4" stroke="#b8c0d0" stroke-width="0.8"/><line x1="14" y1="413.56" x2="17.8" y2="413.56" stroke="#c9c7ba" stroke-width="0.8"/><rect x="9" y="411.06" width="5" height="5" fill="#fafaf6" stroke="#7d9dc4" stroke-width="0.9" rx="0.6"/><path d="M10 413.56h3" stroke="#000" stroke-width="1.1"/><path d="M11.5 412.06v3" stroke="#000" stroke-width="1.1"/><rect x="18.3" y="410.36" width="7.2" height="6.2" fill="#f2f2f0" stroke="#1a1a1a" stroke-width="0.9"/><rect x="17.9" y="409.96" width="7.8" height="1.4" fill="#0a1e8c"/><path d="M18.3 411.36v5.4" stroke="#b8c0d0" stroke-width="0.8"/><line x1="14" y1="422.43" x2="17.8" y2="422.43" stroke="#c9c7ba" stroke-width="0.8"/><rect x="9" y="419.93" width="5" height="5" fill="#fafaf6" stroke="#7d9dc4" stroke-width="0.9" rx="0.6"/><path d="M10 422.43h3" stroke="#000" stroke-width="1.1"/><path d="M11.5 420.93v3" stroke="#000" stroke-width="1.1"/><rect x="18.3" y="419.23" width="7.2" height="6.2" fill="#f2f2f0" stroke="#1a1a1a" stroke-width="0.9"/><rect x="17.9" y="418.83" width="7.8" height="1.4" fill="#0a1e8c"/><path d="M18.3 420.23v5.4" stroke="#b8c0d0" stroke-width="0.8"/><line x1="14" y1="431.31" x2="17.8" y2="431.31" stroke="#c9c7ba" stroke-width="0.8"/><rect x="9" y="428.81" width="5" height="5" fill="#fafaf6" stroke="#7d9dc4" stroke-width="0.9" rx="0.6"/><path d="M10 431.31h3" stroke="#000" stroke-width="1.1"/><path d="M11.5 429.81v3" stroke="#000" stroke-width="1.1"/><rect x="18.3" y="428.11" width="7.2" height="6.2" fill="#f2f2f0" stroke="#1a1a1a" stroke-width="0.9"/><rect x="17.9" y="427.71" width="7.8" height="1.4" fill="#0a1e8c"/><path d="M18.3 429.11v5.4" stroke="#b8c0d0" stroke-width="0.8"/><line x1="14" y1="440.18" x2="17.8" y2="440.18" stroke="#c9c7ba" stroke-width="0.8"/><rect x="9" y="437.68" width="5" height="5" fill="#fafaf6" stroke="#7d9dc4" stroke-width="0.9" rx="0.6"/><path d="M10 440.18h3" stroke="#000" stroke-width="1.1"/><path d="M11.5 438.68v3" stroke="#000" stroke-width="1.1"/><rect x="18.3" y="436.98" width="7.2" height="6.2" fill="#f2f2f0" stroke="#1a1a1a" stroke-width="0.9"/><rect x="17.9" y="436.58" width="7.8" height="1.4" fill="#0a1e8c"/><path d="M18.3 437.98v5.4" stroke="#b8c0d0" stroke-width="0.8"/><line x1="14" y1="449.06" x2="17.8" y2="449.06" stroke="#c9c7ba" stroke-width="0.8"/><rect x="9" y="446.56" width="5" height="5" fill="#fafaf6" stroke="#7d9dc4" stroke-width="0.9" rx="0.6"/><path d="M10 449.06h3" stroke="#000" stroke-width="1.1"/><path d="M11.5 447.56v3" stroke="#000" stroke-width="1.1"/><rect x="18.3" y="445.86" width="7.2" height="6.2" fill="#f2f2f0" stroke="#1a1a1a" stroke-width="0.9"/><rect x="17.9" y="445.46" width="7.8" height="1.4" fill="#0a1e8c"/><path d="M18.3 446.86v5.4" stroke="#b8c0d0" stroke-width="0.8"/><line x1="14" y1="457.94" x2="17.8" y2="457.94" stroke="#c9c7ba" stroke-width="0.8"/><rect x="9" y="455.44" width="5" height="5" fill="#fafaf6" stroke="#7d9dc4" stroke-width="0.9" rx="0.6"/><path d="M10 457.94h3" stroke="#000" stroke-width="1.1"/><path d="M11.5 456.44v3" stroke="#000" stroke-width="1.1"/><rect x="18.3" y="454.74" width="7.2" height="6.2" fill="#f2f2f0" stroke="#1a1a1a" stroke-width="0.9"/><rect x="17.9" y="454.34" width="7.8" height="1.4" fill="#0a1e8c"/><path d="M18.3 455.74v5.4" stroke="#b8c0d0" stroke-width="0.8"/><line x1="14" y1="466.81" x2="17.8" y2="466.81" stroke="#c9c7ba" stroke-width="0.8"/><rect x="9" y="464.31" width="5" height="5" fill="#fafaf6" stroke="#7d9dc4" stroke-width="0.9" rx="0.6"/><path d="M10 466.81h3" stroke="#000" stroke-width="1.1"/><path d="M11.5 465.31v3" stroke="#000" stroke-width="1.1"/><rect x="18.3" y="463.61" width="7.2" height="6.2" fill="#f2f2f0" stroke="#1a1a1a" stroke-width="0.9"/><rect x="17.9" y="463.21" width="7.8" height="1.4" fill="#0a1e8c"/><path d="M18.3 464.61v5.4" stroke="#b8c0d0" stroke-width="0.8"/></svg>
<div class="a rb" style="left:6.6px;top:151.2px;width:74px;height:107.6px"></div>
<div class="a" id="grid">
<div class="a c0 sel" style="top:12.750px"><span>RibbonTabHome</span></div>
<div class="a c1" style="top:12.750px"><span>Home</span></div>
<div class="a c2" style="top:12.750px"></div>
<div class="a c0" style="top:23.875px"><span>RibbonTabFile</span></div>
<div class="a c1" style="top:23.875px"><span>File</span></div>
<div class="a c2" style="top:23.875px"></div>
<div class="a c0" style="top:35.000px"><span>RibbonTabEdit</span></div>
<div class="a c1" style="top:35.000px"><span>Edit</span></div>
<div class="a c2" style="top:35.000px"></div>
<div class="a c0" style="top:46.125px"><span>RibbonTabEffect</span></div>
<div class="a c1" style="top:46.125px"><span>Effect</span></div>
<div class="a c2" style="top:46.125px"></div>
<div class="a c0" style="top:57.250px"><span>RibbonTabNoiseReduction</span></div>
<div class="a c1" style="top:57.250px"><span>Noise Reduction</span></div>
<div class="a c2" style="top:57.250px"></div>
<div class="a c0" style="top:68.375px"><span>RibbonTabBookmark</span></div>
<div class="a c1" style="top:68.375px"><span>Bookmark</span></div>
<div class="a c2" style="top:68.375px"></div>
<div class="a c0" style="top:79.500px"><span>RibbonTabOptions</span></div>
<div class="a c1" style="top:79.500px"><span>Options</span></div>
<div class="a c2" style="top:79.500px"></div>
<div class="a c0" style="top:90.625px"><span>RibbonTabHelp</span></div>
<div class="a c1" style="top:90.625px"><span>Help</span></div>
<div class="a c2" style="top:90.625px"></div>
<div class="a c0" style="top:101.750px"><span>ButtonEditF</span></div>
<div class="a c1" style="top:101.750px"><span>Edit Favorites...</span></div>
<div class="a c2" style="top:101.750px"></div>
<div class="a c0" style="top:112.875px"><span>ButtonEffects</span></div>
<div class="a c1" style="top:112.875px"><span>Effects</span></div>
<div class="a c2" style="top:112.875px"></div>
<div class="a c0" style="top:124.000px"><span>ButtonFavorites</span></div>
<div class="a c1" style="top:124.000px"><span>Favorites</span></div>
<div class="a c2" style="top:124.000px"></div>
<div class="a c0" style="top:135.125px"><span>ButtonShowLeft</span></div>
<div class="a c1" style="top:135.125px"><span>&bull;</span></div>
<div class="a c2" style="top:135.125px"></div>
<div class="a c0" style="top:146.250px"><span>PanelBottom</span></div>
<div class="a c1" style="top:146.250px"><span>PanelBottom</span></div>
<div class="a c2" style="top:146.250px"></div>
<div class="a c0" style="top:157.375px"><span>LabelSelectionSample</span></div>
<div class="a c1" style="top:157.375px"><span>0</span></div>
<div class="a c2" style="top:157.375px"></div>
<div class="a c0" style="top:168.500px"><span>PanelPlay</span></div>
<div class="a c1" style="top:168.500px"><span>PanelPlay</span></div>
<div class="a c2" style="top:168.500px"></div>
<div class="a c0" style="top:179.625px"><span>LabelStart</span></div>
<div class="a c1" style="top:179.625px"><span>0:00:00.000</span></div>
<div class="a c2" style="top:179.625px"></div>
<div class="a c0" style="top:190.750px"><span>LabelEnd</span></div>
<div class="a c1" style="top:190.750px"><span>0:00:00.000</span></div>
<div class="a c2" style="top:190.750px"></div>
<div class="a c0" style="top:201.875px"><span>PanelTime</span></div>
<div class="a c1" style="top:201.875px"><span>spSkinPanel2</span></div>
<div class="a c2" style="top:201.875px"></div>
<div class="a c0" style="top:213.000px"><span>LabelSelLength</span></div>
<div class="a c1" style="top:213.000px"><span>0:00:00.000</span></div>
<div class="a c2" style="top:213.000px"></div>
<div class="a c0" style="top:224.125px"><span>LabelFileLength</span></div>
<div class="a c1" style="top:224.125px"><span>0:00:00.000</span></div>
<div class="a c2" style="top:224.125px"></div>
<div class="a c0" style="top:235.250px"><span>ActionUndo</span></div>
<div class="a c1" style="top:235.250px"><span><u>U</u>ndo</span></div>
<div class="a c2" style="top:235.250px"></div>
<div class="a c0" style="top:246.375px"><span>ActionRedo</span></div>
<div class="a c1" style="top:246.375px"><span>Redo</span></div>
<div class="a c2" style="top:246.375px"></div>
<div class="a c0" style="top:257.500px"><span>ActionCut</span></div>
<div class="a c1" style="top:257.500px"><span>Cu<u>t</u></span></div>
<div class="a c2" style="top:257.500px"></div>
<div class="a c0" style="top:268.625px"><span>ActionCopy</span></div>
<div class="a c1" style="top:268.625px"><span><u>C</u>opy</span></div>
<div class="a c2" style="top:268.625px"></div>
<div class="a c0" style="top:279.750px"><span>ActionCopyToNew</span></div>
<div class="a c1" style="top:279.750px"><span>Copy To <u>N</u>ew</span></div>
<div class="a c2" style="top:279.750px"></div>
</div>
<!-- tree scrollbar -->
<div class="a sb" style="left:155.3px;top:133px;width:8.5px;height:338px"></div>
<div class="a sbtn" style="left:155.4px;top:134.5px;width:8px;height:8.6px"></div>
<svg class="a" style="left:155.4px;top:134.5px" width="8" height="9" viewBox="0 0 8 9"><path d="M2 5.6L4 3.6L6 5.6" stroke="#34405e" stroke-width="1.5" fill="none"/></svg>
<div class="a" style="left:155.4px;top:262.2px;width:8px;height:162.8px;background:linear-gradient(90deg,#c5d5fb,#bcd0fa 50%,#b3c6f4);border:0.7px solid #a8bff2;border-radius:1px"></div>
<div class="a sbtn" style="left:155.4px;top:460.8px;width:8px;height:8.2px"></div>
<svg class="a" style="left:155.4px;top:460.8px" width="8" height="9" viewBox="0 0 8 9"><path d="M2 3.2L4 5.2L6 3.2" stroke="#2a3450" stroke-width="1.3" fill="none"/></svg>
<div class="a" style="left:163.8px;top:133px;width:1px;height:338px;background:#cdd6e4"></div>

<svg class="a" style="left:155px;top:339px" width="9" height="8"><g><rect x="2.3" y="1.5" width="4.5" height="0.8" fill="#eef3ff"/><rect x="2.3" y="3.5" width="4.5" height="0.8" fill="#eef3ff"/><rect x="2.3" y="5.5" width="4.5" height="0.8" fill="#eef3ff"/><rect x="2.8" y="2.3" width="4.5" height="0.8" fill="#8aa8e8"/><rect x="2.8" y="4.3" width="4.5" height="0.8" fill="#8aa8e8"/><rect x="2.8" y="6.3" width="4.5" height="0.8" fill="#8aa8e8"/></g></svg>

<div class="a" style="left:5px;top:132px;width:557.5px;height:1px;background:#909c9e"></div>
<div class="a" style="left:5px;top:133px;width:557.5px;height:1px;background:#d0dbf2"></div>
<!-- grid header -->
<div class="a hdr" style="left:167px;top:133.5px;width:284px;height:11px"></div>
<div class="a" style="left:167px;top:133.5px;width:284px;height:11px">
 <div class="hc" style="left:0;border-left:0;padding-left:3px">String ID:</div>
 <div class="hc" style="left:84px">English</div>
 <div class="hc" style="left:133.5px">German</div>
 <div class="hc" style="left:181.6px">French</div>
 <div class="hc" style="left:233.2px">Spanish</div>
</div>
<div class="a rb" style="left:166px;top:132px;width:287px;height:14px"></div>
<!-- grid vscroll -->
<div class="a sb" style="left:553px;top:133px;width:9px;height:290px"></div>
<div class="a sbtn" style="left:553.2px;top:134.4px;width:8.5px;height:8.6px"></div>
<svg class="a" style="left:553.2px;top:134.4px" width="9" height="9" viewBox="0 0 9 9"><path d="M2.3 5.6L4.3 3.6L6.3 5.6" stroke="#34405e" stroke-width="1.5" fill="none"/></svg>
<div class="a" style="left:553.2px;top:143px;width:8.5px;height:9.6px;background:linear-gradient(90deg,#c5d5fb,#bcd0fa 50%,#b3c6f4);border:0.7px solid #a8bff2;border-radius:1px"></div>
<div class="a sbtn" style="left:553.2px;top:414px;width:8.5px;height:8px"></div>
<svg class="a" style="left:553.2px;top:414px" width="9" height="8" viewBox="0 0 9 8"><path d="M2.3 2.8L4.3 4.8L6.3 2.8" stroke="#34405e" stroke-width="1.5" fill="none"/></svg>
<div class="a" style="left:167px;top:423px;width:395px;height:1px;background:#a9bfdc"></div>
<!-- preview -->
<div class="a" style="left:167px;top:426px;width:395px;height:11.6px;background:#a8a596"></div>
<div class="a" style="left:168.5px;top:427.5px;color:#fff;font-weight:bold;font-size:6.9px;line-height:9px;white-space:nowrap;transform-origin:0 0;transform:scaleX(0.93);-webkit-text-stroke:0.2px #fff;will-change:transform">Preview for RibbonTabHome:</div>
<div class="a" style="left:480.6px;top:426.2px;width:81px;height:11px;background:#fff;border:0.8px solid #7f9db9"></div>
<div class="a" style="left:483px;top:427.6px;font-size:6.4px;line-height:9px;white-space:nowrap;transform-origin:0 0;transform:scaleX(0.9);-webkit-text-stroke:0.15px #000;will-change:transform">English</div>
<div class="a sbtn" style="left:552.5px;top:427px;width:8.5px;height:9.4px"></div>
<svg class="a" style="left:552.5px;top:427px" width="9" height="9" viewBox="0 0 9 9"><path d="M2.3 3.3L4.3 5.3L6.3 3.3" stroke="#34405e" stroke-width="1.5" fill="none"/></svg>
<div class="a" style="left:167px;top:437.6px;width:395px;height:33px;background:#ece9d8;border-left:1px solid #b4c4dc;box-shadow:inset 1px 0 0 #fbfaf2"></div>
<div class="a" style="left:170px;top:438.8px;font-size:6.6px;line-height:9px;white-space:nowrap;transform-origin:0 0;transform:scaleX(0.9);-webkit-text-stroke:0.2px #000;will-change:transform">Home</div>
<div class="a" style="left:167.5px;top:461px;width:385px;height:9px;background:linear-gradient(#f3f2ec,#fefefe 40%,#f7f6f2)"></div>
<div class="a" style="left:168.8px;top:461px;width:8.7px;height:8px;border:0.7px solid #e2e0d4;border-radius:1px;background:#f5f4ef"></div>
<svg class="a" style="left:168.8px;top:461px" width="9" height="8" viewBox="0 0 9 8"><path d="M5 2L3 4L5 6" stroke="#c8c6bc" stroke-width="1.1" fill="none"/></svg>
<div class="a" style="left:544.3px;top:461.5px;width:7px;height:7.5px;border:0.7px solid #e2e0d4;border-radius:1px;background:#f5f4ef"></div>
<svg class="a" style="left:544.3px;top:461.5px" width="7" height="8" viewBox="0 0 7 8"><path d="M2.7 2L4.4 3.8L2.7 5.6" stroke="#c8c6bc" stroke-width="1.1" fill="none"/></svg>
<div class="a" style="left:552.6px;top:439px;width:8.5px;height:22px;background:#f0efe8"></div>
<div class="a" style="left:552.8px;top:440.5px;width:8px;height:8px;border:0.7px solid #e2e0d4;border-radius:1px;background:#f5f4ef"></div>
<svg class="a" style="left:552.8px;top:440.5px" width="8" height="8" viewBox="0 0 8 8"><path d="M2 5L4 3L6 5" stroke="#c8c6bc" stroke-width="1.1" fill="none"/></svg>
<div class="a" style="left:552.8px;top:452.5px;width:8px;height:8px;border:0.7px solid #e2e0d4;border-radius:1px;background:#f5f4ef"></div>
<svg class="a" style="left:552.8px;top:452.5px" width="8" height="8" viewBox="0 0 8 8"><path d="M2 3L4 5L6 3" stroke="#c8c6bc" stroke-width="1.1" fill="none"/></svg>
<!-- status bar -->
<div class="a" style="left:5px;top:470.7px;width:557.5px;height:1px;background:#8f9898"></div>
<div class="a" style="left:5px;top:471.6px;width:557.5px;height:12px;background:#ece9d8"></div>
<div class="a" style="left:261px;top:472.5px;width:1px;height:10px;background:#d0cdb8;box-shadow:1px 0 0 #fff"></div>
<div class="a" style="left:361.3px;top:472.5px;width:1px;height:10px;background:#d0cdb8;box-shadow:1px 0 0 #fff"></div>
<div class="a" style="left:411.7px;top:472.5px;width:1px;height:10px;background:#d0cdb8;box-shadow:1px 0 0 #fff"></div>
<div class="a" style="left:462px;top:472.5px;width:1px;height:10px;background:#d0cdb8;box-shadow:1px 0 0 #fff"></div>
<div class="a st" style="left:364px;top:474.3px;transform-origin:0 0;transform:scaleX(0.86)">Languages: 4</div>
<div class="a st" style="left:414.5px;top:474.3px;transform-origin:0 0;transform:scaleX(0.86)">Properties: 11</div>
<div class="a st" style="left:464px;top:474.3px;transform-origin:0 0;transform:scaleX(0.86)">Items: 235</div>
<svg class="a" style="left:554px;top:475px" width="9" height="9" viewBox="0 0 9 9"><g fill="#fff"><rect x="7.4" y="2.6" width="1" height="1"/><rect x="5.3" y="5.3" width="1" height="1"/><rect x="7.4" y="5.3" width="1" height="1"/><rect x="2.9" y="7.4" width="1" height="1"/><rect x="5.3" y="7.4" width="1" height="1"/><rect x="7.4" y="7.4" width="1" height="1"/></g><g fill="#9e9b8c"><rect x="6.9" y="2.1" width="1" height="1"/><rect x="4.8" y="4.8" width="1" height="1"/><rect x="6.9" y="4.8" width="1" height="1"/><rect x="2.4" y="6.9" width="1" height="1"/><rect x="4.8" y="6.9" width="1" height="1"/><rect x="6.9" y="6.9" width="1" height="1"/></g></svg>

<svg class="a" style="left:553px;top:144px" width="9" height="8"><g><rect x="2.3" y="1.5" width="4.5" height="0.8" fill="#eef3ff"/><rect x="2.3" y="3.5" width="4.5" height="0.8" fill="#eef3ff"/><rect x="2.3" y="5.5" width="4.5" height="0.8" fill="#eef3ff"/><rect x="2.8" y="2.3" width="4.5" height="0.8" fill="#8aa8e8"/><rect x="2.8" y="4.3" width="4.5" height="0.8" fill="#8aa8e8"/><rect x="2.8" y="6.3" width="4.5" height="0.8" fill="#8aa8e8"/></g></svg>

</body></html>
